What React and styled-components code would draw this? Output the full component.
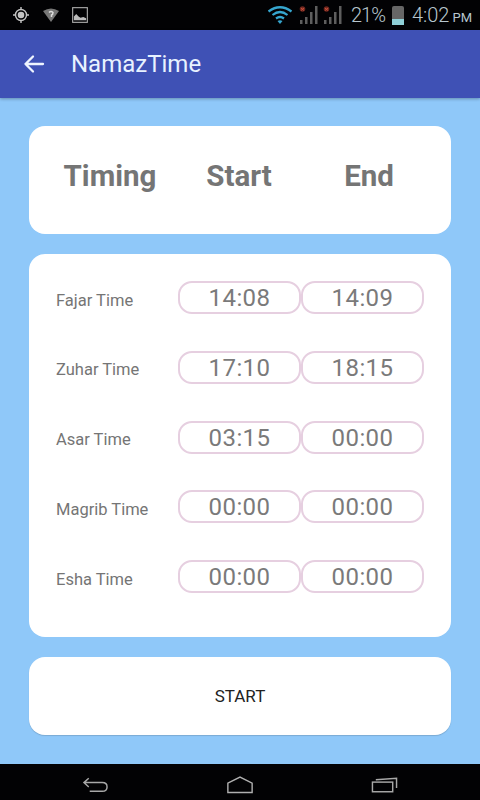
import React from "react";
import styled, { createGlobalStyle } from "styled-components";

const rows = [
    { name: "Fajar Time", start: "14:08", end: "14:09" },
    { name: "Zuhar Time", start: "17:10", end: "18:15" },
    { name: "Asar Time", start: "03:15", end: "00:00" },
    { name: "Magrib Time", start: "00:00", end: "00:00" },
    { name: "Esha Time", start: "00:00", end: "00:00" },
];

const SignalIcon = () => (
    <svg width="20" height="20" viewBox="0 0 20 20">
        <circle cx="3.500" cy="4" r="2.800" fill="#6e261e" />
        <path d="M2 3l3 2.500M5 3L2 5.500" stroke="#c94f3a" strokeWidth="1" />
        <path d="M1 19h2.500v-4H1zM6 19h2.500v-7H6zM11 19h2.500V7H11zM16 19h2.500V1H16z" fill="#5e5e5e" />
    </svg>
);

const App = () => {
    return (
        <Screen>
            <GlobalStyle />
            <StatusBar>
                <StatusIcons>
                    <svg width="18" height="18" viewBox="0 0 18 18" fill="none" stroke="#c4c4c4" strokeWidth="1.4">
                        <circle cx="9" cy="9" r="5.500" />
                        <circle cx="9" cy="9" r="2.600" fill="#c4c4c4" />
                        <path d="M9 1v2.500M9 14.500V17M1 9h2.500M14.500 9H17" />
                    </svg>
                    <svg width="18" height="16" viewBox="0 0 18 16">
                        <path d="M1 4Q9 -1 17 4L9 15Z" fill="#777" />
                        <path d="M7 5.500Q9 3.500 11 5.500Q11 7.500 9.500 8V10" fill="none" stroke="#ddd" strokeWidth="1.500" />
                    </svg>
                    <svg width="16" height="16" viewBox="0 0 17 17">
                        <rect x="0.700" y="0.700" width="15.600" height="15.600" fill="none" stroke="#aaa" strokeWidth="1.200" />
                        <path d="M2 14V10L4.500 7.500 7 10 9 11.500 12 10.500 15 12V14Z" fill="#bbb" />
                    </svg>
                </StatusIcons>
                <StatusRight>
                    <svg width="26" height="20" viewBox="0 0 26 20" fill="none" stroke="#36a6cf" strokeWidth="2.200">
                        <path d="M1.500 6.500Q13 -2 24.500 6.500" />
                        <path d="M5.500 10Q13 4 20.500 10" />
                        <path d="M9 13.500Q13 10.500 17 13.500" />
                        <path d="M13 19L10.500 16Q13 14.500 15.500 16Z" fill="#36a6cf" stroke="none" />
                    </svg>
                    <SignalGroup>
                        <SignalIcon />
                        <SignalIcon />
                    </SignalGroup>
                    <Percent>21%</Percent>
                    <Battery />
                    <Clock>4:02</Clock>
                    <Meridiem>PM</Meridiem>
                </StatusRight>
            </StatusBar>
            <AppBar>
                <svg width="24" height="24" viewBox="0 0 24 24" fill="none" stroke="#eef4ff" strokeWidth="2.300" strokeLinecap="round" strokeLinejoin="round">
                    <path d="M21 12H3.500M11 4.500L3.500 12L11 19.500" />
                </svg>
                <Title>NamazTime</Title>
            </AppBar>
            <Content>
                <HeaderCard>
                    <HeaderLabel>Timing</HeaderLabel>
                    <HeaderLabel>Start</HeaderLabel>
                    <HeaderLabel>End</HeaderLabel>
                </HeaderCard>
                <TimesCard>
                    {rows.map((row) => (
                        <TimeRow key={row.name}>
                            <RowName>{row.name}</RowName>
                            <TimeBox>{row.start}</TimeBox>
                            <TimeBox>{row.end}</TimeBox>
                        </TimeRow>
                    ))}
                </TimesCard>
                <StartCard>START</StartCard>
            </Content>
            <NavBar>
                <svg width="27" height="18" viewBox="0 0 28 18" fill="none" stroke="#a8a8a8" strokeWidth="1.500">
                    <path d="M7 2L2 6.500L7 11M2 6.500H21Q26 6.500 26 11Q26 15.500 21 15.500H8" />
                </svg>
                <svg width="28" height="20" viewBox="0 0 30 20" fill="none" stroke="#b0b0b0" strokeWidth="1.500">
                    <path d="M2 8L15 1.500L28 8V18H2Z" />
                </svg>
                <svg width="27" height="16" viewBox="0 0 28 16" fill="none" stroke="#a8a8a8" strokeWidth="1.500">
                    <rect x="1.500" y="5" width="21" height="10" />
                    <path d="M5 2.500L26.500 1V11" />
                </svg>
            </NavBar>
        </Screen>
    );
};

export default App;

const GlobalStyle = createGlobalStyle`
    html, body {
        margin: 0;
        padding: 0;
        background: #90caf9;
    }
    * {
        box-sizing: border-box;
    }
`;

const Screen = styled.div`
    width: 480px;
    height: 800px;
    display: flex;
    flex-direction: column;
    overflow: hidden;
    font-family: Roboto, "Liberation Sans", sans-serif;
    background-color: #8fc8f9;
`;

const StatusBar = styled.div`
    height: 30px;
    flex: none;
    background-color: #020204;
    display: flex;
    align-items: center;
    justify-content: space-between;
    padding: 0 8px 0 12px;
`;

const StatusIcons = styled.div`
    display: flex;
    align-items: center;
    gap: 12px;
`;

const StatusRight = styled.div`
    display: flex;
    align-items: center;
`;

const SignalGroup = styled.div`
    display: flex;
    gap: 4px;
    margin: 0 8px 0 6px;
`;

const Percent = styled.span`
    font-size: 20px;
    font-weight: 300;
    letter-spacing: -1px;
    color: #b7c6ce;
`;

const Battery = styled.div`
    width: 12px;
    height: 19px;
    margin: 0 8px 0 7px;
    background: linear-gradient(#666 0 70%, #8fd0d8 70%);
    border-radius: 2px 2px 0 0;
`;

const Clock = styled.span`
    font-size: 20px;
    font-weight: 300;
    color: #b7c6ce;
`;

const Meridiem = styled.span`
    font-size: 13px;
    color: #b7c6ce;
    margin: 4px 0 0 3px;
`;

const AppBar = styled.div`
    height: 68px;
    flex: none;
    background-color: #3f51b5;
    box-shadow: 0 1px 3px rgba(0, 0, 0, 0.3);
    display: flex;
    align-items: center;
    gap: 25px;
    padding: 0 22px;
`;

const Title = styled.span`
    font-size: 24px;
    color: #e8f2ff;
`;

const Content = styled.div`
    flex: 1;
    display: flex;
    flex-direction: column;
    gap: 20px;
    padding: 28px 29px 0;
`;

const Card = styled.div`
    background-color: #ffffff;
    border-radius: 16px;
`;

const HeaderCard = styled(Card)`
    height: 108px;
    display: grid;
    grid-template-columns: 150px 108px 152px;
    align-items: center;
    justify-items: center;
    padding: 0 6px 8px;
`;

const HeaderLabel = styled.span`
    font-size: 29.5px;
    font-weight: 700;
    color: #757575;
`;

const TimesCard = styled(Card)`
    height: 383px;
    padding: 27px 27px 0;
    display: flex;
    flex-direction: column;
    gap: 36.750px;
`;

const TimeRow = styled.div`
    display: grid;
    grid-template-columns: 122px 123px 123px;
    align-items: center;
    height: 33px;
`;

const RowName = styled.span`
    font-size: 16.500px;
    color: #757575;
    margin-top: 5px;
`;

const TimeBox = styled.div`
    height: 33px;
    border: 2px solid #e6cfe0;
    border-radius: 14px;
    text-align: center;
    line-height: 31px;
    font-size: 24px;
    letter-spacing: 0.4px;
    color: #7a7a7a;
`;

const StartCard = styled(Card)`
    height: 78px;
    display: flex;
    align-items: center;
    justify-content: center;
    font-size: 17px;
    color: #222222;
    box-shadow: 0 1px 1px rgba(0, 0, 0, 0.15);
`;

const NavBar = styled.div`
    height: 36px;
    flex: none;
    background-color: #020204;
    display: flex;
    align-items: center;
    justify-content: space-between;
    padding: 6px 82px 0;
`;
